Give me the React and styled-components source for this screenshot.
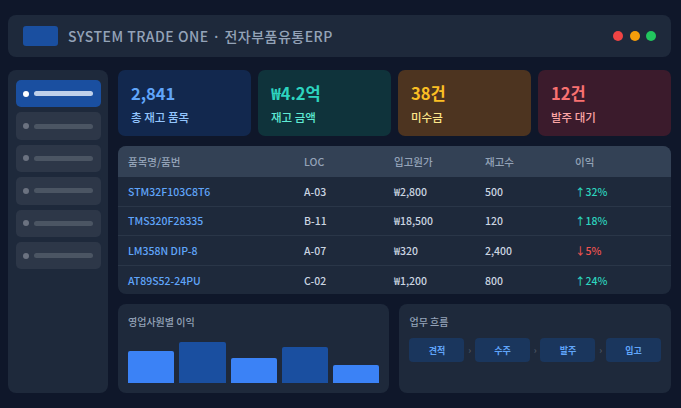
import React from 'react';
import styled, {createGlobalStyle} from 'styled-components';

const GlobalStyle = createGlobalStyle`
  * { box-sizing: border-box; }
  html, body { margin: 0; padding: 0; background: #0f172a; }
  body {
    font-family: "Noto Sans CJK KR", "Noto Sans", sans-serif;
    overflow: hidden;
  }
`

const Page = styled.div`
  width: 681px;
  height: 408px;
  padding: 15px 10px 15px 8px;
  display: flex;
  flex-direction: column;
  gap: 13px;
  background: #0f172a;
`

const Header = styled.header`
  height: 42px;
  flex: none;
  display: flex;
  align-items: center;
  padding: 0 15px;
  background: #1e293b;
  border-radius: 8px;
`

const Logo = styled.div`
  width: 35px;
  height: 20px;
  border-radius: 3px;
  background: #1a4fa0;
  margin-right: 10px;
`

const Title = styled.div`
  font-size: 14px;
  font-weight: 500;
  letter-spacing: 0.5px;
  color: #94a3b8;
  flex: 1;
`

const Lights = styled.div`
  display: flex;
  gap: 6.5px;
`

const Light = styled.span`
  width: 10px;
  height: 10px;
  border-radius: 50%;
  background: ${props => props.color};
`

const Body = styled.div`
  flex: 1;
  min-height: 0;
  display: flex;
  gap: 10px;
`

const Sidebar = styled.nav`
  width: 100px;
  flex: none;
  padding: 10px 7px 10px 8px;
  display: flex;
  flex-direction: column;
  gap: 5px;
  background: #1e293b;
  border-radius: 8px;
`

const NavItem = styled.div`
  height: 27.4px;
  flex: none;
  display: flex;
  align-items: center;
  gap: 5px;
  padding: 0 8px 0 7px;
  border-radius: 5px;
  background: ${props => props.$active ? '#1a4fa0' : '#2d3748'};
`

const NavDot = styled.span`
  width: 6px;
  height: 6px;
  flex: none;
  border-radius: 50%;
  background: ${props => props.$active ? '#ffffff' : '#6b7280'};
`

const NavBar = styled.span`
  flex: 1;
  height: 5px;
  border-radius: 3px;
  background: ${props => props.$active ? '#bfd0ea' : '#4b5563'};
`

const Content = styled.main`
  flex: 1;
  min-width: 0;
  display: flex;
  flex-direction: column;
  gap: 10px;
`

const Cards = styled.section`
  height: 66px;
  flex: none;
  display: grid;
  grid-template-columns: repeat(4, 133px);
  gap: 7px;
`

const Card = styled.div`
  padding: 11px 13px;
  border-radius: 7px;
  background: ${props => props.$bg};
`

const CardValue = styled.div`
  font-size: 16.5px;
  font-weight: 700;
  line-height: 25px;
  color: ${props => props.$color};
`

const CardLabel = styled.div`
  font-size: 11.5px;
  font-weight: 500;
  line-height: 16px;
  margin-top: 3px;
  color: ${props => props.$color};
`

const Table = styled.section`
  height: 148px;
  flex: none;
  border-radius: 8px;
  overflow: hidden;
  background: #1e293b;
`

const Row = styled.div`
  display: grid;
  grid-template-columns: 176px 90px 91px 90px 106px;
  align-items: center;
  height: ${props => props.$head ? '31px' : '29.6px'};
  background: ${props => props.$head ? '#334155' : 'transparent'};
  border-bottom: ${props => props.$head ? 'none' : '1px solid #2a3648'};

  &:last-child {
    border-bottom: none;
  }
`

const HeadCell = styled.div`
  padding-left: 10px;
  font-size: 10.5px;
  font-weight: 500;
  color: #94a3b8;
`

const Cell = styled.div`
  padding-left: 10px;
  font-size: 10.5px;
  font-weight: 500;
  color: #cbd5e1;
`

const PartCell = styled(Cell)`
  color: #60a5fa;
`

const MarginCell = styled(Cell)`
  color: ${props => props.$down ? '#ef5350' : '#2dd4bf'};
`

const Bottom = styled.section`
  flex: 1;
  min-height: 0;
  display: grid;
  grid-template-columns: 271.45px 271.55px;
  gap: 10px;
`

const Panel = styled.div`
  padding: 10px;
  border-radius: 8px;
  background: #1e293b;
  display: flex;
  flex-direction: column;
`

const PanelTitle = styled.div`
  font-size: 10px;
  font-weight: 500;
  line-height: 16px;
  color: #94a3b8;
`

const Bars = styled.div`
  flex: 1;
  display: flex;
  align-items: flex-end;
  gap: 5px;
`

const Bar = styled.div`
  flex: 1;
  border-radius: 2px 2px 0 0;
  background: ${props => props.$dark ? '#1a4fa0' : '#3b82f6'};
`

const Flow = styled.div`
  display: flex;
  align-items: center;
  margin-top: 8px;
`

const Step = styled.div`
  width: 55px;
  height: 24px;
  flex: none;
  display: flex;
  align-items: center;
  justify-content: center;
  border-radius: 4px;
  background: #1a365d;
  font-size: 9px;
  font-weight: 700;
  color: #60a5fa;
`

const Chevron = styled.span`
  flex: 1;
  text-align: center;
  font-size: 9px;
  font-weight: 700;
  color: #4b5563;
`

const cards = [
  {value: '2,841', label: '총 재고 품목', bg: '#12284e', color: '#60a5fa', sub: '#93c5fd'},
  {value: '₩4.2억', label: '재고 금액', bg: '#0f333b', color: '#2dd4bf', sub: '#5eead4'},
  {value: '38건', label: '미수금', bg: '#4d3420', color: '#fbbf24', sub: '#fde68a'},
  {value: '12건', label: '발주 대기', bg: '#3b1b2c', color: '#f87171', sub: '#fca5a5'},
]

const rows = [
  {part: 'STM32F103C8T6', loc: 'A-03', cost: '₩2,800', stock: '500', margin: '↑32%'},
  {part: 'TMS320F28335', loc: 'B-11', cost: '₩18,500', stock: '120', margin: '↑18%'},
  {part: 'LM358N DIP-8', loc: 'A-07', cost: '₩320', stock: '2,400', margin: '↓5%', down: true},
  {part: 'AT89S52-24PU', loc: 'C-02', cost: '₩1,200', stock: '800', margin: '↑24%'},
]

const columns = ['품목명/품번', 'LOC', '입고원가', '재고수', '이익']
const barHeights = [32, 41, 25, 36, 18]
const steps = ['견적', '수주', '발주', '입고']

const App = () => (
  <Page>
    <GlobalStyle/>
    <Header>
      <Logo/>
      <Title>SYSTEM TRADE ONE · 전자부품유통ERP</Title>
      <Lights>
        <Light color='#ef4444'/>
        <Light color='#f59e0b'/>
        <Light color='#22c55e'/>
      </Lights>
    </Header>
    <Body>
      <Sidebar>
        {[true, false, false, false, false, false].map((active, i) =>
          <NavItem key={i} $active={active}>
            <NavDot $active={active}/>
            <NavBar $active={active}/>
          </NavItem>)}
      </Sidebar>
      <Content>
        <Cards>
          {cards.map(card =>
            <Card key={card.label} $bg={card.bg}>
              <CardValue $color={card.color}>{card.value}</CardValue>
              <CardLabel $color={card.sub}>{card.label}</CardLabel>
            </Card>)}
        </Cards>
        <Table>
          <Row $head>
            {columns.map(col => <HeadCell key={col}>{col}</HeadCell>)}
          </Row>
          {rows.map(row =>
            <Row key={row.part}>
              <PartCell>{row.part}</PartCell>
              <Cell>{row.loc}</Cell>
              <Cell>{row.cost}</Cell>
              <Cell>{row.stock}</Cell>
              <MarginCell $down={row.down}>{row.margin}</MarginCell>
            </Row>)}
        </Table>
        <Bottom>
          <Panel>
            <PanelTitle>영업사원별 이익</PanelTitle>
            <Bars>
              {barHeights.map((h, i) =>
                <Bar key={i} $dark={i % 2 === 1} style={{height: h}}/>)}
            </Bars>
          </Panel>
          <Panel>
            <PanelTitle>업무 흐름</PanelTitle>
            <Flow>
              {steps.map((step, i) =>
                <React.Fragment key={step}>
                  {i > 0 && <Chevron>›</Chevron>}
                  <Step>{step}</Step>
                </React.Fragment>)}
            </Flow>
          </Panel>
        </Bottom>
      </Content>
    </Body>
  </Page>
)

export default App
